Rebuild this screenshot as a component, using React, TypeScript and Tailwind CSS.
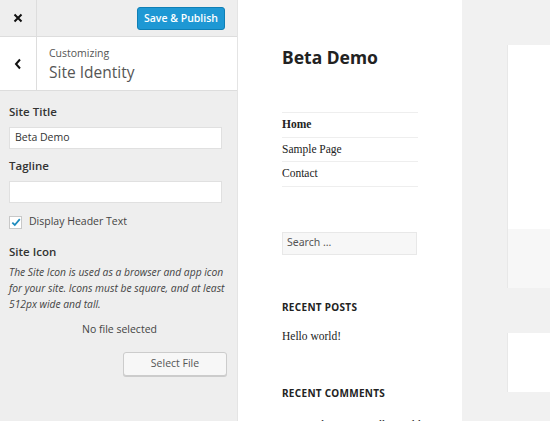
import React from "react";

export default function App() {
  const os = { fontFamily: '"Open Sans", "Noto Sans", sans-serif' };
  return (
    <div className="flex w-[550px] h-[421px] overflow-hidden bg-[#f1f1f1]" style={os}>
      {/* Customizer sidebar */}
      <div className="w-[237px] shrink-0 h-full bg-[#eeeeee] flex flex-col text-[#444]">
        <div className="h-[37px] shrink-0 flex items-center border-b border-[#dddddd]">
          <div className="w-[37px] h-full flex items-center justify-center border-r border-[#dddddd]">
            <svg width="10" height="10" viewBox="0 0 10 10">
              <path d="M1.5 1.5 L8.5 8.5 M8.5 1.5 L1.5 8.5" stroke="#111" strokeWidth="2" />
            </svg>
          </div>
          <div className="flex-1 flex justify-end pr-[12px]">
            <button className="w-[88px] h-[23px] rounded-[3px] bg-[#1e98d4] border border-[#0f7fb5] text-white text-[10.5px] font-semibold leading-none">
              Save &amp; Publish
            </button>
          </div>
        </div>
        <div className="h-[54px] shrink-0 flex bg-white border-b border-[#dddddd]">
          <div className="w-[37px] h-full flex items-center justify-center border-r border-[#dddddd]">
            <svg width="8" height="12" viewBox="0 0 8 12">
              <path d="M6 1.5 L2 6 L6 10.5" stroke="#111" strokeWidth="2" fill="none" />
            </svg>
          </div>
          <div className="pl-[12px] pt-[9px] flex flex-col">
            <span className="text-[10.5px] leading-[14px] text-[#555]">Customizing</span>
            <span className="text-[15.5px] leading-[22px] text-[#555] mt-[1px]">Site Identity</span>
          </div>
        </div>
        <div className="px-[9px] pt-[13px] flex flex-col">
          <label className="text-[11.5px] font-semibold text-[#333] leading-[16px]">Site Title</label>
          <div className="mt-[7px] h-[22px] w-[213px] bg-white border border-[#e0e0e0] flex items-center pl-[5px] text-[10.5px] text-[#333]">
            Beta Demo
          </div>
          <label className="mt-[9px] text-[11.5px] font-semibold text-[#333] leading-[16px]">Tagline</label>
          <div className="mt-[7px] h-[22px] w-[213px] bg-white border border-[#e0e0e0]" />
          <div className="mt-[11px] h-[16px] flex items-center gap-[7px]">
            <div className="w-[13px] h-[13px] bg-white border border-[#c8c8c8] flex items-center justify-center">
              <svg width="10" height="9" viewBox="0 0 10 9">
                <path d="M1.3 4.6 L3.8 7 L8.8 1.2" stroke="#1e8cbe" strokeWidth="1.8" fill="none" />
              </svg>
            </div>
            <span className="text-[10.5px] text-[#444]">Display Header Text</span>
          </div>
          <label className="mt-[14px] text-[11.5px] font-semibold text-[#333] leading-[16px]">Site Icon</label>
          <p className="mt-[4px] text-[10.3px] italic leading-[16px] text-[#444]">
            The Site Icon is used as a browser and app icon for your site. Icons must be square, and at least 512px wide and tall.
          </p>
          <div className="mt-[9px] leading-[16px] text-center text-[10.5px] text-[#444] pl-[2px]">No file selected</div>
          <div className="mt-[15px] flex justify-end pr-[1px]">
            <button className="w-[104px] h-[24px] bg-[#f7f7f7] border border-[#cccccc] rounded-[3px] text-[10.5px] text-[#555] shadow-[0_1px_0_#ccc]">
              Select File
            </button>
          </div>
        </div>
      </div>

      {/* Preview */}
      <div className="w-[225px] shrink-0 h-full bg-white border-l border-[#e4e4e4] pl-[44px] pr-[44px] pt-[45px]">
        <div className="text-[17.5px] font-bold text-[#222] leading-[24px]" style={{ fontFamily: '"Noto Sans", sans-serif' }}>
          Beta Demo
        </div>
        <div className="mt-[43px] border-t border-[#eeeeee]" style={{ fontFamily: '"Liberation Serif", "DejaVu Serif", serif' }}>
          {["Home", "Sample Page", "Contact"].map((t, i) => (
            <div key={t} className={`h-[24.5px] flex items-center border-b border-[#eeeeee] text-[11.5px] text-[#222] ${i === 0 ? "font-bold" : ""}`}>
              {t}
            </div>
          ))}
        </div>
        <div className="mt-[45px] h-[23px] w-[135px] bg-[#f7f7f7] border border-[#e8e8e8] flex items-center pl-[4px] text-[10.5px] text-[#555]" style={{ fontFamily: '"Noto Sans", sans-serif' }}>
          Search …
        </div>
        <div className="mt-[45px] text-[10px] font-bold tracking-[0.03em] text-[#222]" style={{ fontFamily: '"Noto Sans", sans-serif' }}>
          RECENT POSTS
        </div>
        <div className="mt-[13px] text-[11.5px] text-[#222]" style={{ fontFamily: '"Liberation Serif", "DejaVu Serif", serif' }}>
          Hello world!
        </div>
        <div className="mt-[41px] text-[10px] font-bold tracking-[0.03em] text-[#222]" style={{ fontFamily: '"Noto Sans", sans-serif' }}>
          RECENT COMMENTS
        </div>
        <div className="mt-[16px] text-[11.5px] text-[#222] whitespace-nowrap" style={{ fontFamily: '"Liberation Serif", "DejaVu Serif", serif' }}>
          Mr WordPress on Hello world!
        </div>
      </div>

      {/* Right content */}
      <div className="flex-1 h-full bg-[#f1f1f1] pl-[45px] pt-[45px] flex flex-col">
        <div className="h-[184px] bg-white border-l border-[#e8e8e8]" />
        <div className="h-[59px] bg-[#f7f7f7] border-l border-[#e8e8e8]" />
        <div className="mt-[45px] h-[59px] bg-white border-l border-[#e8e8e8]" />
      </div>
    </div>
  );
}
